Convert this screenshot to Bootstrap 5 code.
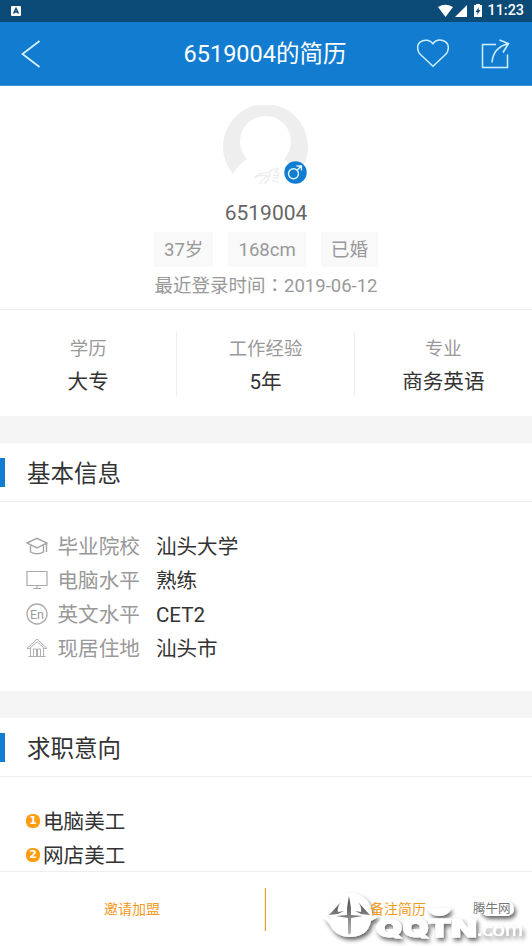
<!DOCTYPE html>
<html lang="zh-CN">
<head>
<meta charset="utf-8">
<meta name="viewport" content="width=device-width, initial-scale=1">
<title>6519004的简历</title>
<link href="https://cdn.jsdelivr.net/npm/bootstrap@5.3.0/dist/css/bootstrap.min.css" rel="stylesheet">
<style>
body{font-family:Roboto,"Noto Sans CJK SC",sans-serif;background:#fff;color:#333;height:946px;overflow:hidden;letter-spacing:0}
svg{display:block;flex:none}
.status-bar{height:22px;background:#0c4a78;color:#fff;padding:0 8px 0 11px;font-size:14.4px;font-weight:500;line-height:22px}
.title-bar{height:64px;background:#127dd0;color:#fff;border-bottom:1px solid #3f94d8;padding:1px 22px 0 21px;display:grid;grid-template-columns:94px 1fr 94px}
.title-bar h1{font-size:23.5px;line-height:30px;font-weight:400;margin:0 1px 0 0}
.profile{height:224px;border-bottom:1px solid #eee;padding:19px 0 0}
.avatar{width:86px;height:86px}
.gender{right:2px;bottom:7px}
.user-name{font-size:21px;line-height:26px;color:#666;margin-top:9px}
.tag{background:#f9f9f9;color:#999;font-size:18.6px;line-height:36px;height:35px;padding:0 10px}
.tags{gap:15px;margin-top:6px}
.login{font-size:18.5px;line-height:26px;color:#999;margin-top:4px}
.wide-colon{font-family:"Noto Sans CJK TC",sans-serif}
.facts{height:106px;padding-top:22px}
.fact{height:64px;border-right:1px solid #eee;padding-top:4px}
.fact:last-child{border:0}
.fact dt{font-weight:400;font-size:18.4px;line-height:26px;color:#999}
.fact dd{font-size:20.6px;line-height:28px;margin:6px 0 0}
.band{height:27px;background:#f5f5f5}
.section-head{height:59px;border-bottom:1px solid #eee}
.section-head::before{content:"";width:5px;height:29px;background:#127dd0;margin-right:22px}
.section-head h2{font-size:23.5px;line-height:32px;font-weight:400;margin:0;padding-top:3px}
.info{height:189px;padding:28px 26px 0}
.line{height:34px;font-size:20.6px;line-height:34px}
.line svg{margin-bottom:2px}
.line .key{color:#999;margin:0 16px 0 9.5px}
.jobs{height:94px;padding:28px 26px 0}
.num{width:14px;height:14px;border-radius:6px;background:#ff9c10;color:#fff;font:bold 11px/14px "DejaVu Sans",sans-serif;text-align:center;margin:0 3px 2px 0}
.actions{height:75px;border-top:1px solid #eee;color:#f39a1e;font-size:14px;padding-right:2px}
.rule{width:2px;height:43px;background:#d3a540;border-left:1px solid #fff0b8}
.watermark{right:0;bottom:0}
</style>
</head>
<body>
<div class="status-bar d-flex align-items-center justify-content-between">
  <svg width="10" height="10"><rect width="10" height="10" rx="1" fill="#fff"/><path d="M2.6 7.5 5 2.5 7.4 7.5M3.5 6h3" fill="none" stroke="#0c4a78" stroke-width="1.5"/></svg>
  <div class="d-flex align-items-center">
    <svg width="47" height="16" viewBox="0 0 47 16"><path d="M2 4Q9-.5 17 4L9.500 14Z" fill="#fff"/><path d="M19 14 31 2V14Z" fill="#fff"/><path d="M38 2h2V1h4v1h2v12h-8z" fill="#fff"/><path d="m43 4-3.500 5h2l-.5 3 3.500-5h-2z" fill="#0c4a78"/></svg>
    <span class="ms-1 text-nowrap">11:23</span>
  </div>
</div>
<header class="title-bar align-items-center">
  <svg width="20" height="28" viewBox="0 0 20 28" fill="none" stroke="#d9f1ff" stroke-width="1.700"><path d="M18.500 1 1.500 14l17 13"/></svg>
  <h1 class="text-center text-nowrap">6519004的简历</h1>
  <div class="d-flex justify-content-between align-items-center">
    <svg width="34" height="30" viewBox="0 0 34 30" fill="none" stroke="#d2f0ff" stroke-width="1.500"><path d="M17 28.500 4.200 16.500C-.5 12-.3 5.500 3.500 2.500 8-.5 14 .4 17 4.500 20-.4 26-.5 30.500 2.500c3.800 3 4 9.500-.7 14L17 28.500Z" transform="translate(1 .5) scale(.94)"/></svg>
    <svg width="29" height="30" viewBox="0 0 29 30" fill="none" stroke="#d2f0ff" stroke-width="1.500"><path d="M15 5.500H1.500v23h25v-13M11 23.500Q12 8.500 27.500 4.500M18.500 1l9 3.500-5.500 9"/></svg>
  </div>
</header>
<section class="profile d-flex flex-column align-items-center">
  <div class="avatar position-relative">
    <svg width="86" height="86" viewBox="0 0 86 86"><path d="M10 69A42.500 42.500 0 1 1 75 69Q67 59 61 54A25.500 25.500 0 1 0 24 54Q15 60 10 69Z" fill="#eee"/><path d="M31 73q5-6 15-5 3-5 9-4l-3 3q4 1 4 3M31 73q5-4 14-2-6 3-8 8M47 69q-2 7-6 10M50 70l6 1m-6 2h5m-6 2 7 2" fill="none" stroke="#ececec" stroke-width="1.300"/></svg>
    <svg class="gender position-absolute" width="23" height="23" viewBox="0 0 23 23"><circle cx="11.500" cy="11.500" r="11.200" fill="#127dd0"/><g fill="none" stroke="#dff5ff" stroke-width="1.400"><circle cx="9.500" cy="12.800" r="5"/><path d="m13 9.300 4.200-4.300M12.500 5H17.400V9.500"/></g></svg>
  </div>
  <div class="user-name">6519004</div>
  <div class="tags d-flex"><span class="tag">37岁</span><span class="tag">168cm</span><span class="tag">已婚</span></div>
  <div class="login text-nowrap">最近登录时间<span class="wide-colon" lang="zh-TW">：</span>2019-06-12</div>
</section>
<dl class="facts row g-0 text-center mb-0">
  <div class="fact col-4"><dt>学历</dt><dd>大专</dd></div>
  <div class="fact col-4"><dt>工作经验</dt><dd>5年</dd></div>
  <div class="fact col-4"><dt>专业</dt><dd>商务英语</dd></div>
</dl>
<div class="band"></div>
<div class="section-head d-flex align-items-center"><h2>基本信息</h2></div>
<section class="info">
  <div class="line d-flex align-items-center"><svg width="22" height="18" viewBox="0 0 22 18" fill="none" stroke="#a6a6a6" stroke-width="1.400"><path d="M1 6 11 1.300 21 6 11 11ZM4.500 8.500v6.500q6.500 3.500 13 0V8.500M20.500 6v9"/></svg><span class="key">毕业院校</span><span>汕头大学</span></div>
  <div class="line d-flex align-items-center"><svg width="22" height="20" viewBox="0 0 22 20" fill="none" stroke="#aaa" stroke-width="1.200"><path d="M1 1.500h20v14H1ZM11 15.500v3M7 18.500h8"/></svg><span class="key">电脑水平</span><span>熟练</span></div>
  <div class="line d-flex align-items-center"><svg width="22" height="22" viewBox="0 0 22 22" fill="none" stroke="#aaa" stroke-width="1.300"><circle cx="11" cy="11" r="10"/><text x="11" y="15.500" text-anchor="middle" font-size="12.500" fill="#999" stroke="none">En</text></svg><span class="key">英文水平</span><span>CET2</span></div>
  <div class="line d-flex align-items-center"><svg width="22" height="20" viewBox="0 0 22 20" fill="none" stroke="#b0b0b0" stroke-width="1"><path d="M1 10.500 11 1l10 9.500h-2.500L11 3.800 3.500 10.500ZM4.500 10v8.500M17.500 10v8.500M2.500 18.500h17M7.500 18v-7h3v7M11.500 18v-7h3v7"/></svg><span class="key">现居住地</span><span>汕头市</span></div>
</section>
<div class="band"></div>
<div class="section-head d-flex align-items-center"><h2>求职意向</h2></div>
<section class="jobs">
  <div class="line d-flex align-items-center"><span class="num">1</span>电脑美工</div>
  <div class="line d-flex align-items-center"><span class="num">2</span>网店美工</div>
</section>
<footer class="actions d-flex align-items-center text-center">
  <div class="col">邀请加盟</div><div class="rule"></div><div class="col position-relative z-1">备注简历</div>
</footer>
<svg class="watermark position-absolute" width="222" height="75" viewBox="310 871 222 75">
  <defs>
    <filter id="soft" x="-20%" y="-20%" width="140%" height="150%"><feDropShadow dx="2" dy="3" stdDeviation="2" flood-color="#000" flood-opacity=".6"/></filter>
    <linearGradient id="shade" x1="0" y1="0" x2="0" y2="1"><stop offset="0" stop-color="#444"/><stop offset="1" stop-color="#bbb"/></linearGradient>
  </defs>
  <g filter="url(#soft)" fill="#fff">
    <path d="M323 916 331 919C328 904 338 893 350 893C363 893 372 903 372 913L378 917L371 921C369 932 361 937 350 937C339 937 333 931 330 925Z"/>
    <path d="M428 908h23q-2 8-12 8-9 0-11-8zM480 901h26q8 1 8 9-1 6-9 6h-18q-10-3-7-15z"/>
    <text x="376" y="936.500" font-family="Inter, sans-serif" font-weight="900" font-size="25" textLength="101" lengthAdjust="spacingAndGlyphs" stroke="#fff" stroke-width="1">QQTN</text>
    <text x="477" y="936" font-family="Lato, sans-serif" font-size="18.500" textLength="46" lengthAdjust="spacingAndGlyphs">.com</text>
  </g>
  <path d="M341 902 329 915l9-1 6-3-6 1q-1-5 3-10ZM358 902l12 13-9-1-6-3 6 1q1-5-3-10ZM349 896l2 12v7l12 1-12 2v15l-2 2-1-2v-15l-12-2 11-1v-7Z" fill="url(#shade)"/>
  <text x="473" y="912.500" font-size="12.500" fill="#777">腾牛网</text>
</svg>
<script src="https://cdn.jsdelivr.net/npm/bootstrap@5.3.0/dist/js/bootstrap.bundle.min.js"></script>
</body>
</html>
